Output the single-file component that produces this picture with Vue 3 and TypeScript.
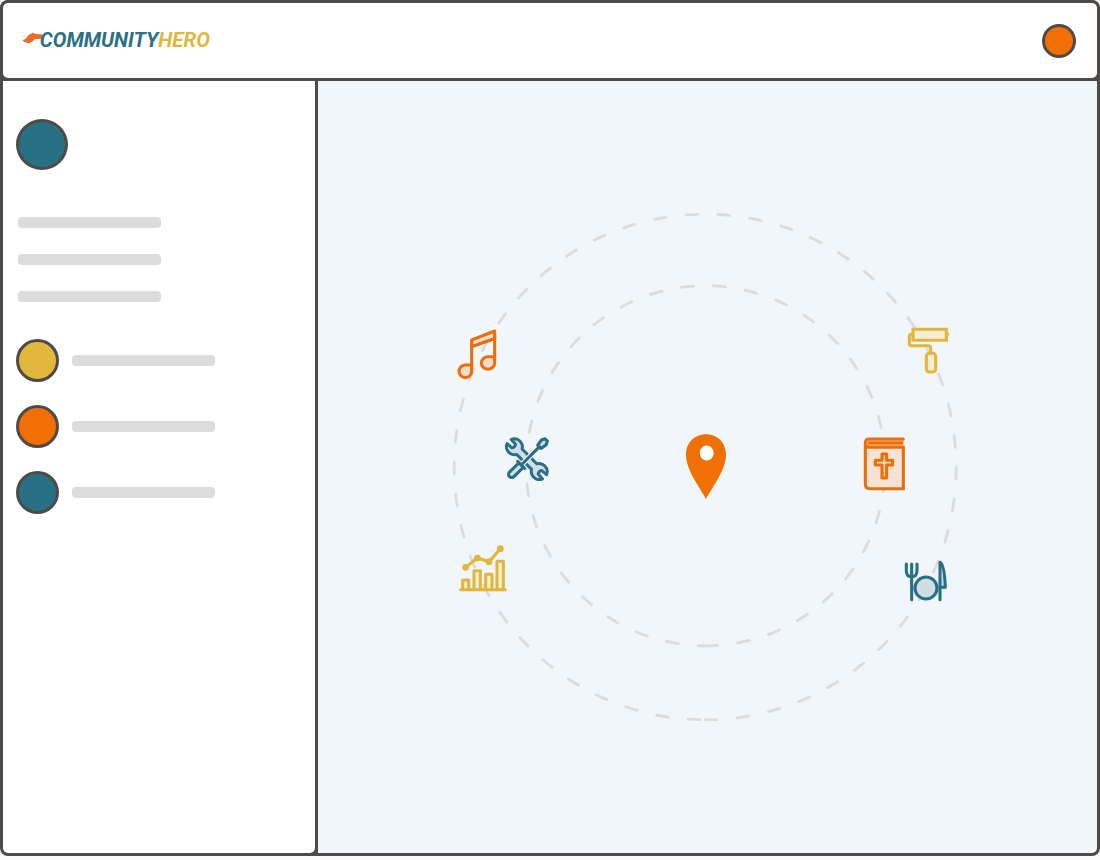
<script setup lang="ts">
interface Contact {
  id: number
  tone: 'gold' | 'orange' | 'teal'
}

const summaryLines: number[] = [1, 2, 3]
const contacts: Contact[] = [
  { id: 1, tone: 'gold' },
  { id: 2, tone: 'orange' },
  { id: 3, tone: 'teal' },
]
</script>

<template>
  <div class="window">
    <header class="topbar">
      <svg class="logo" viewBox="20 28 194 24" width="194" height="24">
        <path
          class="wing"
          d="M22.6 40.4 C25 39.6 26.8 38 27.6 36.6 L26.8 36.4 C28.6 35.6 30 33.6 31.6 33.8 L32.4 32.8 C34 34 36 33.2 38 34.2 L41.5 34.2 L44 36.4 C41.4 39.4 38.4 39.4 36 38.8 C33.6 39.6 33 41.8 30.4 42.4 L29.4 43.4 C27.8 42.6 26.4 43.4 25.6 42 C24.4 42 23.4 41.4 22.6 40.4 Z"
        />
        <text class="word community" x="39.8" y="47" textLength="118.4" lengthAdjust="spacingAndGlyphs">COMMUNITY</text>
        <text class="word hero" x="158.2" y="47" textLength="51.8" lengthAdjust="spacingAndGlyphs">HERO</text>
      </svg>
      <span class="disc account orange"></span>
    </header>

    <div class="body">
      <aside class="sidebar">
        <span class="disc profile teal"></span>
        <div class="summary">
          <span v-for="n in summaryLines" :key="n" class="bar"></span>
        </div>
        <ul class="contacts">
          <li v-for="c in contacts" :key="c.id" class="contact">
            <span class="disc" :class="c.tone"></span>
            <span class="bar"></span>
          </li>
        </ul>
      </aside>

      <main class="stage">
        <svg class="map" viewBox="318 81 779 772" width="779" height="772">
          <!-- Range rings -->
          <g class="rings">
            <path class="outer" d="M705.2 719.8 A251 252.8 0 0 0 705.2 214.2 A251 252.8 0 0 0 705.2 719.8" />
            <path class="inner" d="M705.7 645.8 A179.6 180 0 0 0 705.7 285.8 A179.6 180 0 0 0 705.7 645.8" />
          </g>

          <!-- Music -->
          <g class="icon ink-orange" transform="translate(440 315) scale(.33333)">
            <path class="tint" d="M95 95 V75 L164 48 V71 Z" />
            <path class="tint" d="M95 150 V169 A19 19 0 1 1 75 150 Z" />
            <path class="tint" d="M164 125 V144 A20 19 0 1 1 144 125 Z" />
            <path d="M95 95 L164 71 M95 150 V90 M164 125 V60" />
          </g>

          <!-- Wrench and screwdriver -->
          <g class="icon ink-teal" transform="translate(440 315) scale(.33333)">
            <g transform="translate(260.5 432.5) rotate(45) scale(.96)">
              <path
                class="tint"
                d="M-33 -12 H33 C38 -22 52 -28 65 -23 C71 -20 76 -15 78 -9 L58 -8 Q52 0 58 8 L78 9 C76 15 71 20 65 23 C52 28 38 22 33 12 H-33 C-38 22 -52 28 -65 23 C-71 20 -76 15 -78 9 L-58 8 Q-52 0 -58 -8 L-78 -9 C-76 -15 -71 -20 -65 -23 C-52 -28 -38 -22 -33 -12 Z"
              />
            </g>
            <g transform="translate(260.5 433) rotate(-45)">
              <path class="gap" d="M-20 0 H20" />
              <path d="M-22 0 H54" />
              <path class="tint" d="M-24 -9.5 H-64 A9.5 9.5 0 0 0 -64 9.5 H-24 Z" />
              <path d="M-24 -15 V15" />
              <path class="tint" d="M53 -7 L72 -10 L82 -5 V5 L72 10 L53 7 Z" />
            </g>
          </g>

          <!-- Growth chart -->
          <g class="icon ink-gold" transform="translate(440 530) scale(.33333)">
            <path
              class="tint"
              d="M68 179 V150 H86 V179 M102 179 V122 H121 V179 M137 179 V133 H156 V179 M171 179 V94 H190 V179"
            />
            <path d="M62 179 H196 M77 112 L112 84 L147 95 L181 56" />
            <circle cx="77" cy="112" r="5.5" />
            <circle cx="112" cy="84" r="5.5" />
            <circle cx="147" cy="95" r="5.5" />
            <circle cx="181" cy="56" r="5.5" />
          </g>

          <!-- Paint roller -->
          <g class="icon ink-gold" transform="translate(850 310) scale(.33333)">
            <path class="tint square" d="M189 58 H289 V91 H189 Z" />
            <path d="M291 73 H293 M187 73 H185 Q178 73 178 80 V100 Q178 107 185 107 H235 Q242 107 242 114 V128" />
            <rect class="tint" x="229" y="130" width="28" height="56" rx="9" />
          </g>

          <!-- Bible -->
          <g class="icon ink-orange" transform="translate(850 310) scale(.33333)">
            <path class="page" d="M161 387 H58 Q46 387 46 400 Q46 412 58 412 H161 Z" />
            <path class="cover" d="M46 400 Q46 412 58 412 H161 V536 H60 Q46 536 46 524 Z" />
            <path class="square" d="M160 387 H58 Q46 387 46 400 V522 Q46 536 60 536 H160 V412 H58 Q46 412 46 400" />
            <path d="M58 399 H155" />
            <path class="tint" d="M96 432 H110 V451 H128 V465 H110 V504 H96 V465 H76 V451 H96 Z" />
          </g>

          <!-- Dining -->
          <g class="icon ink-teal" transform="translate(890 540) scale(.33333)">
            <path d="M65 72 V179 M49 72 V94 Q50 110 65 110 Q80 110 81 94 V72" />
            <circle class="plate" cx="108" cy="144" r="33" />
            <path class="tint" d="M150 179 V67 C160 70 164 98 166 142 H150" />
          </g>

          <!-- Current location -->
          <path
            class="pin"
            d="M706 499 C699 486 686 470 686 454.5 C686 442.5 695 434.3 706 434.3 C717 434.3 726 442.5 726 454.5 C726 470 713 486 706 499 Z"
          />
          <ellipse class="pin-hole" cx="706.7" cy="453" rx="7" ry="7.6" />
        </svg>
      </main>
    </div>
  </div>
</template>

<style>
body {
  margin: 0;
  background: #fafafa;
}
</style>

<style scoped>
.window {
  box-sizing: border-box;
  width: 1100px;
  height: 856px;
  display: flex;
  flex-direction: column;
  background: #4d4a48;
  border-radius: 8px;
  overflow: hidden;
}

.topbar {
  box-sizing: border-box;
  height: 81px;
  flex: none;
  display: flex;
  align-items: center;
  justify-content: space-between;
  padding: 0 21px 0 17px;
  border: 3px solid #4d4a48;
  border-radius: 8px;
  background: #fff;
}

.logo {
  display: block;
  margin-bottom: 1px;
}

.wing {
  fill: #ea6e28;
}

.word {
  font-family: Roboto, 'Liberation Sans', sans-serif;
  font-size: 20.8px;
  font-weight: 700;
  font-style: italic;
}

.community {
  fill: #2b7083;
}

.hero {
  fill: #e0b83e;
}

.body {
  flex: 1;
  display: flex;
  padding: 0 3px 3px;
}

.sidebar {
  box-sizing: border-box;
  width: 312px;
  flex: none;
  display: flex;
  flex-direction: column;
  align-items: flex-start;
  padding: 38px 0 0 13px;
  background: #fff;
  border-radius: 0 0 5px 5px;
}

.disc {
  box-sizing: border-box;
  flex: none;
  width: 43px;
  height: 43px;
  border: 3px solid #4f4a47;
  border-radius: 50%;
}

.teal {
  background: #287184;
}

.gold {
  background: #e2b83c;
}

.orange {
  background: #f07004;
}

.account {
  width: 34px;
  height: 34px;
}

.profile {
  width: 52px;
  height: 51px;
}

.bar {
  width: 143px;
  height: 11px;
  border-radius: 4px;
  background: #dcdcdc;
}

.summary {
  display: flex;
  flex-direction: column;
  gap: 26px;
  margin: 47px 0 0 2px;
}

.contacts {
  display: flex;
  flex-direction: column;
  gap: 23px;
  margin: 37px 0 0;
  padding: 0;
  list-style: none;
}

.contact {
  display: flex;
  align-items: center;
  gap: 12.6px;
}

.stage {
  flex: 1;
  margin-left: 3px;
  background: #f0f6f9;
  border-radius: 0 0 5px 0;
  overflow: hidden;
}

.map {
  display: block;
}

.rings {
  fill: none;
  stroke: #dcdcdd;
  stroke-width: 2.8;
  stroke-linecap: round;
}

.outer {
  stroke-dasharray: 11.8 20.14;
}

.inner {
  stroke-dasharray: 12 20.05;
}

.icon {
  fill: none;
  stroke: currentColor;
  stroke-width: 9.2;
  stroke-linecap: round;
  stroke-linejoin: round;
}

.ink-orange {
  --wash: #ffb988;
  color: #ea6f0c;
}

.ink-teal {
  --wash: #9fbfca;
  color: #286f85;
}

.ink-gold {
  --wash: #ffe49a;
  color: #e1b63a;
}

.tint {
  fill: var(--wash);
  fill-opacity: 0.4;
}

.page {
  fill: #f9b27c;
  stroke: none;
}

.cover {
  fill: #f7e3d4;
  stroke: none;
}

.plate {
  fill: #d0dde2;
}

.square {
  stroke-linejoin: miter;
}

.gap {
  stroke: #f0f6f9;
  stroke-width: 16;
  stroke-linecap: butt;
}

.pin {
  fill: #f07004;
}

.pin-hole {
  fill: #fff;
}
</style>
